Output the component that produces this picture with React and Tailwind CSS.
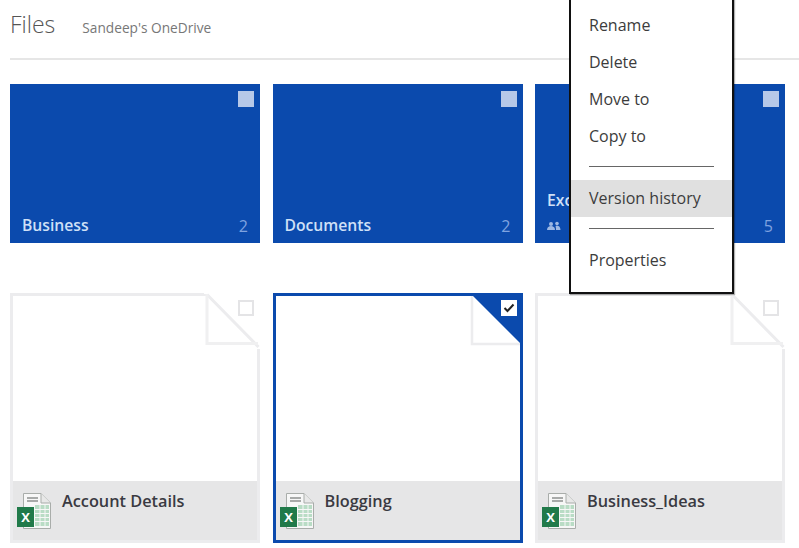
import React from "react";

const font = { fontFamily: '"Open Sans", "Noto Sans", sans-serif' };

function ExcelIcon() {
  return (
    <svg width="36" height="40" viewBox="0 0 36 40" className="shrink-0">
      <path d="M6.5 1.5H24L33.5 11V36.5H6.5Z" fill="#f7f7f7" stroke="#a9adaa" strokeWidth="1" />
      <path d="M24 1.5V11H33.5" fill="#e8e8e8" stroke="#a9adaa" strokeWidth="1" />
      <path d="M10 6h11M10 9h11" stroke="#a8aaa9" strokeWidth="2" />
      <rect x="18" y="13" width="14" height="21" fill="#b9dcc5" />
      <path d="M18 17.5h14M18 21.5h14M18 25.5h14M18 29.5h14M23 13v21M28 13v21" stroke="#f7f7f7" strokeWidth="1" />
      <rect x="0" y="15" width="17" height="20" fill="#217a4a" />
      <text x="8.5" y="30" textAnchor="middle" fontSize="13" fontWeight="700" fill="#fff" style={{ fontFamily: '"Open Sans", sans-serif' }}>X</text>
    </svg>
  );
}

function FolderTile({ name, count, shared }) {
  return (
    <div className="relative flex h-[159px] w-[250px] flex-col justify-end bg-[#0b4aad] pb-[5px] pl-[12px] pr-[12px]">
      <div className="absolute right-[6px] top-[7px] h-[16px] w-[16px] bg-[#b6c8e8]" />
      {shared ? (
        <>
          <div className="mb-[4px] text-[15.7px] font-semibold leading-[20px] text-[#cfe0f7]">{name}</div>
          <div className="flex h-[24px] items-center justify-between">
            <svg width="14" height="10" viewBox="0 0 14 10" fill="#9db8e4">
              <circle cx="4" cy="3" r="2" />
              <path d="M0 9c0-3 2-4 4-4s4 1 4 4Z" />
              <circle cx="10" cy="2.6" r="1.8" />
              <path d="M8.5 5c2.5-1 5 0 5 4H9c0-2-.2-3-.5-4Z" />
            </svg>
            <span className="text-[16px] leading-[20px] text-[#7fa3e0]">{count}</span>
          </div>
        </>
      ) : (
        <div className="flex h-[24px] items-center justify-between">
          <span className="text-[15.7px] font-semibold text-[#cfe0f7]">{name}</span>
          <span className="text-[16px] text-[#7fa3e0]">{count}</span>
        </div>
      )}
    </div>
  );
}

function FileTile({ name, selected }) {
  return (
    <div className={`relative flex h-[250px] w-[250px] flex-col border-[3px] bg-white ${selected ? "border-[#0b4aad]" : "border-[#ececee]"}`}>
      <svg width="56" height="56" viewBox="0 0 56 56" className="absolute right-[-3px] top-[-3px]">
        {selected ? (
          <>
            <path d="M5 3V51H53" fill="none" stroke="#ececee" strokeWidth="2.5" />
            <path d="M3 0H56V53Z" fill="#0b4aad" />
          </>
        ) : (
          <>
            <path d="M0 -1H56V56H53L3 1H0Z" fill="#fff" />
            <path d="M3 1.5L54.5 54" fill="none" stroke="#ececee" strokeWidth="3" />
            <path d="M3 1V50.5H54" fill="none" stroke="#f0f0f1" strokeWidth="3" />
          </>
        )}
      </svg>
      {selected ? (
        <div className="absolute right-[3px] top-[4px] flex h-[16px] w-[16px] items-center justify-center bg-white">
          <svg width="12" height="10" viewBox="0 0 12 10">
            <path d="M1.5 5L4.5 8L10.5 1.5" fill="none" stroke="#222" strokeWidth="2" />
          </svg>
        </div>
      ) : (
        <div className="absolute right-[3px] top-[4px] h-[16px] w-[16px] border-2 border-[#e4e4e6] bg-white" />
      )}
      <div className="flex-1" />
      <div className="flex h-[59px] items-start bg-[#e6e6e7] pl-[4px] pt-[11px]">
        <ExcelIcon />
        <div className="ml-[9px] mt-[-3px] text-[16.3px] font-semibold leading-[24px] text-[#3a3a42]">{name}</div>
      </div>
    </div>
  );
}

function MenuItem({ children, active }) {
  return (
    <div className={`flex h-[37px] items-center pb-[2px] pl-[18px] text-[16px] text-[#3c3c3c] ${active ? "bg-[#e0e0e0]" : ""}`}>
      {children}
    </div>
  );
}

export default function App() {
  return (
    <div className="relative h-[548px] w-[799px] overflow-hidden bg-white" style={font}>
      <header className="ml-[10px] flex h-[60px] items-start border-b-2 border-[#e6e6e6] pt-[8px]">
        <h1 className="text-[23px] font-light leading-[32px] text-[#555]">Files</h1>
        <span className="ml-[27px] mt-[10px] text-[13.7px] leading-[20px] text-[#777]">Sandeep's OneDrive</span>
      </header>

      <div className="ml-[10px] mt-[24px] flex gap-[12.5px]">
        <FolderTile name="Business" count="2" />
        <FolderTile name="Documents" count="2" />
        <FolderTile name="Excel" count="5" shared />
      </div>

      <div className="ml-[10px] mt-[50px] flex gap-[12.5px]">
        <FileTile name="Account Details" />
        <FileTile name="Blogging" selected />
        <FileTile name="Business_Ideas" />
      </div>

      <div className="absolute left-[569px] top-[-4px] h-[298px] w-[165px] border-2 border-[#111] bg-white pt-[9px] shadow-[1px_1px_1px_rgba(0,0,0,0.3)]">
        <MenuItem>Rename</MenuItem>
        <MenuItem>Delete</MenuItem>
        <MenuItem>Move to</MenuItem>
        <MenuItem>Copy to</MenuItem>
        <div className="mx-[18px] mt-[11px] h-px bg-[#666]" />
        <div className="mt-[13px]">
          <MenuItem active>Version history</MenuItem>
        </div>
        <div className="mx-[18px] mt-[11px] h-px bg-[#666]" />
        <div className="mt-[13px]">
          <MenuItem>Properties</MenuItem>
        </div>
      </div>
    </div>
  );
}
